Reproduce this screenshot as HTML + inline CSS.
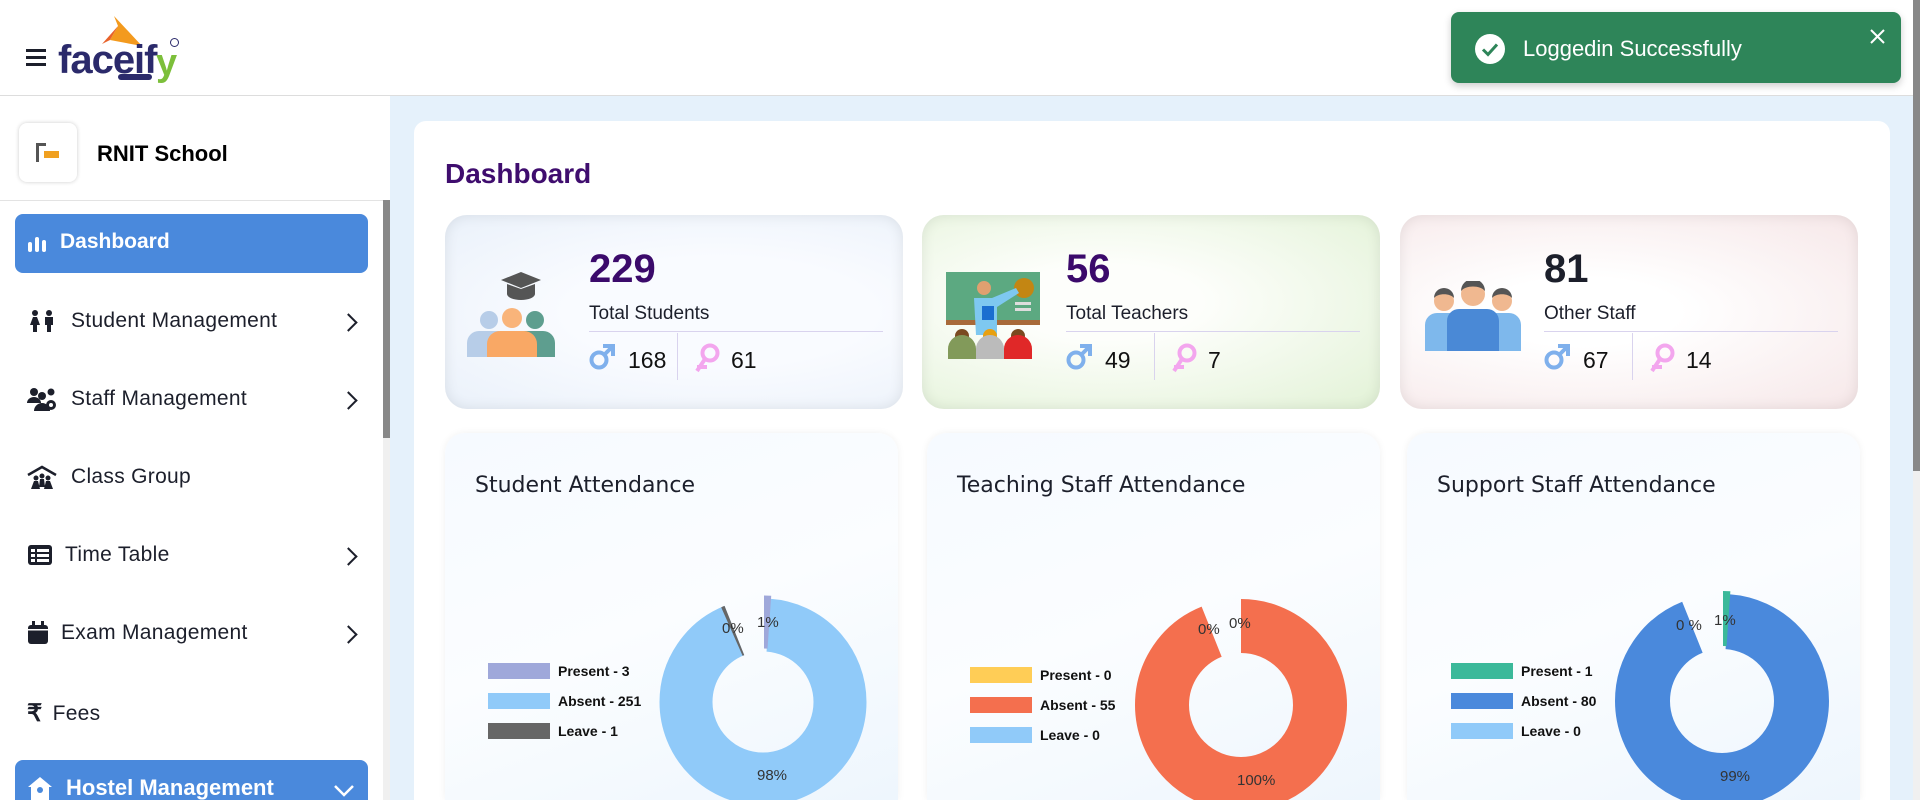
<!DOCTYPE html>
<html><head><meta charset="utf-8"><style>
*{box-sizing:border-box;margin:0;padding:0}
html,body{width:1920px;height:800px;overflow:hidden}
body{background:#e5f1fb;font-family:"Liberation Sans",sans-serif;position:relative;color:#1c1f2b}
.abs{position:absolute}
#hdr{left:0;top:0;width:1920px;height:96px;background:#fff;border-bottom:1px solid #ddd}
#side{left:0;top:96px;width:390px;height:704px;background:#fff}
.nav{position:absolute;left:27px;font-size:21px;color:#1c1f2b;letter-spacing:.3px;display:flex;align-items:center}
.nav svg{margin-right:14px}
.chev{position:absolute;left:342px;width:13px;height:13px;border-right:2.5px solid #1c1f2b;border-top:2.5px solid #1c1f2b;transform:rotate(45deg)}
.stat{position:absolute;top:215px;width:458px;height:194px;border-radius:22px;box-shadow:inset 0 0 14px rgba(0,0,0,.09)}
.num{position:absolute;left:144px;top:32px;font-size:40px;font-weight:bold;color:#3b0a6b}
.lbl{position:absolute;left:144px;top:88px;font-size:19px;color:#1c1f2b}
.hl{position:absolute;left:144px;top:116px;width:294px;height:1px;background:#d9d3ee}
.vl{position:absolute;left:232px;top:118px;width:1px;height:47px;background:#d9d3ee}
.g{position:absolute;top:128px}
.gn{position:absolute;top:132px;font-size:23px;color:#111}
.ch{position:absolute;top:433px;width:453px;height:367px;border-radius:20px 20px 0 0;background:linear-gradient(160deg,#f6faff,#fbfdff 50%,#eef6fd);box-shadow:0 0 8px rgba(0,0,0,.06)}
.ct{position:absolute;left:30px;top:40px;font-size:22px;color:#1c1f2b;font-family:"DejaVu Sans","Liberation Sans",sans-serif}
.lg{position:absolute;font-size:14px;font-weight:bold;color:#111;display:flex;align-items:center;font-family:"Liberation Sans",sans-serif}
.lg i{display:inline-block;width:62px;height:16px;margin-right:8px}
.pl{position:absolute;font-size:15px;color:#333;font-family:"Liberation Sans",sans-serif}
</style></head><body>
<div id="hdr" class="abs"></div>
<div class="abs" style="left:26px;top:49px;width:20px;height:3px;background:#1c1f2b"></div>
<div class="abs" style="left:26px;top:56px;width:20px;height:3px;background:#1c1f2b"></div>
<div class="abs" style="left:26px;top:63px;width:20px;height:3px;background:#1c1f2b"></div>
<svg class="abs" style="left:100px;top:12px" width="80" height="40"><polygon points="14,4 18,14 10,28 42,34" fill="#f39a1e"/><polygon points="18,14 10,28 2,32" fill="#e8622a"/></svg>
<div class="abs" style="left:58px;top:38px;font-size:40px;font-weight:bold;color:#2b2a6b;letter-spacing:-1px">faceif</div>
<div class="abs" style="left:156px;top:42px;font-size:38px;font-weight:bold;color:#7cbf3a">y</div>
<div class="abs" style="left:170px;top:38px;width:9px;height:9px;border:1.5px solid #2b2a6b;border-radius:50%"></div>
<div class="abs" style="left:118px;top:74px;width:34px;height:6px;background:#2b2a6b;border-radius:3px"></div>
<div class="abs" style="left:1451px;top:12px;width:450px;height:71px;background:#2e8559;border-radius:8px;box-shadow:0 3px 8px rgba(0,0,0,.2)"></div>
<svg class="abs" style="left:1475px;top:34px" width="30" height="30"><circle cx="15" cy="15" r="15" fill="#fff"/><path d="M8 15.5l5 5 9-10" stroke="#2e8559" stroke-width="3" fill="none"/></svg>
<div class="abs" style="left:1523px;top:36px;font-size:22px;color:#fff">Loggedin Successfully</div>
<svg class="abs" style="left:1870px;top:29px" width="15" height="15"><path d="M1 1L14 14M14 1L1 14" stroke="#fff" stroke-width="2"/></svg>
<div class="abs" style="left:1913px;top:0;width:7px;height:800px;background:#f0f0f0"></div>
<div class="abs" style="left:1913px;top:0;width:7px;height:471px;background:#888"></div>
<div id="side" class="abs"></div>
<div class="abs" style="left:19px;top:123px;width:58px;height:59px;border-radius:8px;box-shadow:0 0 4px rgba(0,0,0,.2);background:#fff"></div>
<div class="abs" style="left:36px;top:143px;width:3px;height:19px;background:#555"></div>
<div class="abs" style="left:36px;top:143px;width:10px;height:3px;background:#555"></div>
<div class="abs" style="left:44px;top:151px;width:15px;height:7px;background:#f0a020"></div>
<div class="abs" style="left:97px;top:141px;font-size:22px;font-weight:bold;color:#000">RNIT School</div>
<div class="abs" style="left:0;top:200px;width:383px;height:1px;background:#e3e3e3"></div>
<div class="abs" style="left:383px;top:200px;width:7px;height:600px;background:#f0f0f0"></div>
<div class="abs" style="left:383px;top:200px;width:7px;height:238px;background:#888"></div>
<div class="abs" style="left:15px;top:214px;width:353px;height:59px;background:#4a89dc;border-radius:8px"></div>
<svg class="abs" style="left:27px;top:233px" width="20" height="20"><rect x="1" y="9" width="4" height="10" rx="2" fill="#fff"/><rect x="8" y="4" width="4" height="15" rx="2" fill="#fff"/><rect x="15" y="7" width="4" height="12" rx="2" fill="#fff"/></svg>
<div class="abs" style="left:60px;top:230px;font-size:21px;font-weight:bold;color:#fff">Dashboard</div>

<div class="nav" style="top:309px"><svg width="30" height="24"><circle cx="8" cy="4" r="3" fill="#1c1f2b"/><circle cx="22" cy="4" r="3" fill="#1c1f2b"/><path d="M3 16l3-8h4l3 8h-3v7H6v-7z" fill="#1c1f2b"/><path d="M18 8h8v8h-2v7h-4v-7h-2z" fill="#1c1f2b"/></svg>Student Management</div>
<div class="chev" style="top:316px"></div>
<div class="nav" style="top:387px"><svg width="30" height="24"><circle cx="7" cy="5" r="4" fill="#1c1f2b"/><circle cx="24" cy="5" r="3.5" fill="#1c1f2b"/><circle cx="15" cy="9" r="4" fill="#1c1f2b"/><path d="M0 16a7 6 0 0 1 14 0z" fill="#1c1f2b"/><path d="M7 24a8 8 0 0 1 16 0z" fill="#1c1f2b"/><circle cx="24" cy="18" r="5" fill="#1c1f2b"/><circle cx="24" cy="18" r="2" fill="#fff"/></svg>Staff Management</div>
<div class="chev" style="top:394px"></div>
<div class="nav" style="top:465px"><svg width="30" height="24"><path d="M1 10L15 2l14 8" stroke="#1c1f2b" stroke-width="2.5" fill="none"/><circle cx="9" cy="13" r="2.5" fill="#1c1f2b"/><circle cx="15" cy="11" r="2.5" fill="#1c1f2b"/><circle cx="21" cy="13" r="2.5" fill="#1c1f2b"/><path d="M4 24l3-8h4l2 8zM12 22l1-8h4l1 8zM17 24l2-8h4l3 8z" fill="#1c1f2b"/></svg>Class Group</div>
<div class="nav" style="top:543px"><svg width="26" height="24" style="margin-right:12px"><rect x="1" y="2" width="24" height="20" rx="3" fill="#1c1f2b"/><rect x="4" y="6" width="4" height="3" fill="#fff"/><rect x="10" y="6" width="12" height="3" fill="#fff"/><rect x="4" y="11" width="4" height="3" fill="#fff"/><rect x="10" y="11" width="12" height="3" fill="#fff"/><rect x="4" y="16" width="4" height="3" fill="#fff"/><rect x="10" y="16" width="12" height="3" fill="#fff"/></svg>Time Table</div>
<div class="chev" style="top:550px"></div>
<div class="nav" style="top:621px"><svg width="22" height="24" style="margin-right:12px"><rect x="1" y="4" width="20" height="19" rx="3" fill="#1c1f2b"/><rect x="5" y="0" width="3" height="6" fill="#1c1f2b"/><rect x="14" y="0" width="3" height="6" fill="#1c1f2b"/><rect x="1" y="8" width="20" height="1.5" fill="#fff"/></svg>Exam Management</div>
<div class="chev" style="top:628px"></div>
<div class="nav" style="top:699px"><span style="font-size:24px;font-weight:bold;margin-right:10px">₹</span>Fees</div>
<div class="abs" style="left:15px;top:760px;width:353px;height:60px;background:#4a89dc;border-radius:8px"></div>
<svg class="abs" style="left:27px;top:775px" width="26" height="25"><path d="M13 2L1 12h3v13h18V12h3z" fill="#fff"/><circle cx="13" cy="15" r="3" fill="#4a89dc"/></svg>
<div class="abs" style="left:66px;top:775px;font-size:22px;font-weight:bold;color:#fff">Hostel Management</div>
<svg class="abs" style="left:333px;top:784px" width="22" height="14"><path d="M2 2l9 9 9-9" stroke="#fff" stroke-width="2.5" fill="none"/></svg>

<div class="abs" style="left:414px;top:121px;width:1476px;height:679px;background:#fff;border-radius:12px 12px 0 0"></div>
<div class="abs" style="left:445px;top:158px;font-size:28px;font-weight:bold;color:#3f0d6e">Dashboard</div>

<div class="stat" style="left:445px;background:radial-gradient(ellipse at 60% 50%,#f9fbff 40%,#eaf1fa)">
<svg class="abs" style="left:22px;top:57px" width="92" height="85"><path d="M34 8l20-8 20 8-20 8z" fill="#555"/><path d="M40 12v10a14 6 0 0 0 28 0V12l-14 5z" fill="#555"/><circle cx="22" cy="48" r="9" fill="#b7cde8"/><circle cx="68" cy="48" r="9" fill="#5e9e8f"/><path d="M0 85v-14a12 12 0 0 1 12-12h20v26z" fill="#b7cde8"/><path d="M56 85V59h20a12 12 0 0 1 12 12v14z" fill="#5e9e8f"/><circle cx="45" cy="46" r="10" fill="#f9b47a"/><path d="M20 86V72a13 13 0 0 1 13-13h24a13 13 0 0 1 13 13v14z" fill="#f9a865"/></svg>
<div class="num">229</div><div class="lbl">Total Students</div><div class="hl"></div><div class="vl"></div>
<svg class="g" style="left:144px" width="26" height="28"><circle cx="10" cy="17" r="7.5" stroke="#7fb0ec" stroke-width="4" fill="none"/><path d="M15 12l8-8M14 3h10v10" stroke="#7fb0ec" stroke-width="4" fill="none"/></svg><div class="gn" style="left:183px">168</div>
<svg class="g" style="left:250px" width="26" height="30"><circle cx="15" cy="10" r="7.5" stroke="#f3a6ee" stroke-width="4" fill="none"/><path d="M10 16l-8 12M2 24h10" stroke="#f3a6ee" stroke-width="4" fill="none"/></svg><div class="gn" style="left:286px">61</div>
</div>
<div class="stat" style="left:922px;background:radial-gradient(ellipse at 40% 45%,#fdfefb 25%,#e2f2d6)">
<svg class="abs" style="left:24px;top:57px" width="95" height="87"><rect x="0" y="0" width="94" height="52" fill="#5ca981"/><rect x="0" y="48" width="94" height="5" fill="#a86a3a"/><circle cx="78" cy="16" r="10" fill="#c38613"/><rect x="69" y="30" width="16" height="3" fill="#ddd"/><rect x="69" y="36" width="16" height="3" fill="#ddd"/><circle cx="38" cy="16" r="7" fill="#e0a070"/><path d="M28 26h18l24-10 3 5-22 14v28H30z" fill="#7ec8f0"/><rect x="36" y="34" width="12" height="14" fill="#1a6ed0"/><circle cx="16" cy="64" r="7" fill="#7a4a20"/><circle cx="44" cy="64" r="7" fill="#e8a010"/><circle cx="72" cy="64" r="7" fill="#7a4a20"/><path d="M2 87v-10a10 10 0 0 1 28 0v10z" fill="#829a5a"/><path d="M30 87v-10a10 10 0 0 1 28 0v10z" fill="#bbb"/><path d="M58 87v-10a10 10 0 0 1 28 0v10z" fill="#e02828"/></svg>
<div class="num">56</div><div class="lbl">Total Teachers</div><div class="hl"></div><div class="vl"></div>
<svg class="g" style="left:144px" width="26" height="28"><circle cx="10" cy="17" r="7.5" stroke="#7fb0ec" stroke-width="4" fill="none"/><path d="M15 12l8-8M14 3h10v10" stroke="#7fb0ec" stroke-width="4" fill="none"/></svg><div class="gn" style="left:183px">49</div>
<svg class="g" style="left:250px" width="26" height="30"><circle cx="15" cy="10" r="7.5" stroke="#f3a6ee" stroke-width="4" fill="none"/><path d="M10 16l-8 12M2 24h10" stroke="#f3a6ee" stroke-width="4" fill="none"/></svg><div class="gn" style="left:286px">7</div>
</div>
<div class="stat" style="left:1400px;background:radial-gradient(ellipse at 40% 50%,#fff 25%,#f6e7e8)">
<svg class="abs" style="left:25px;top:66px" width="96" height="70"><circle cx="19" cy="20" r="10" fill="#f0b890"/><path d="M9 17a10 10 0 0 1 20 0c-4-5-16-5-20 0z" fill="#555"/><circle cx="77" cy="20" r="10" fill="#f0b890"/><path d="M67 17a10 10 0 0 1 20 0c-4-5-16-5-20 0z" fill="#555"/><path d="M0 70V44a12 12 0 0 1 12-12h20v38z" fill="#7eb8ec"/><path d="M64 70V32h20a12 12 0 0 1 12 12v26z" fill="#7eb8ec"/><circle cx="48" cy="13" r="12" fill="#f0b890"/><path d="M36 10a12 12 0 0 1 24 0c-5-6-19-6-24 0z" fill="#555"/><path d="M22 70V40a12 12 0 0 1 12-12h28a12 12 0 0 1 12 12v30z" fill="#4a89d6"/></svg>
<div class="num" style="color:#1c1f2b">81</div><div class="lbl">Other Staff</div><div class="hl"></div><div class="vl"></div>
<svg class="g" style="left:144px" width="26" height="28"><circle cx="10" cy="17" r="7.5" stroke="#7fb0ec" stroke-width="4" fill="none"/><path d="M15 12l8-8M14 3h10v10" stroke="#7fb0ec" stroke-width="4" fill="none"/></svg><div class="gn" style="left:183px">67</div>
<svg class="g" style="left:250px" width="26" height="30"><circle cx="15" cy="10" r="7.5" stroke="#f3a6ee" stroke-width="4" fill="none"/><path d="M10 16l-8 12M2 24h10" stroke="#f3a6ee" stroke-width="4" fill="none"/></svg><div class="gn" style="left:286px">14</div>
</div>

<div class="ch" style="left:445px"><div class="ct">Student Attendance</div>
<div class="lg" style="left:43px;top:230px"><i style="background:#9fa8da"></i>Present - 3</div>
<div class="lg" style="left:43px;top:260px"><i style="background:#90caf9"></i>Absent - 251</div>
<div class="lg" style="left:43px;top:290px"><i style="background:#666"></i>Leave - 1</div>
</div>
<div class="ch" style="left:927px"><div class="ct">Teaching Staff Attendance</div>
<div class="lg" style="left:43px;top:234px"><i style="background:#ffcd56"></i>Present - 0</div>
<div class="lg" style="left:43px;top:264px"><i style="background:#f46f4e"></i>Absent - 55</div>
<div class="lg" style="left:43px;top:294px"><i style="background:#90caf9"></i>Leave - 0</div>
</div>
<div class="ch" style="left:1407px"><div class="ct">Support Staff Attendance</div>
<div class="lg" style="left:44px;top:230px"><i style="background:#3bb99a"></i>Present - 1</div>
<div class="lg" style="left:44px;top:260px"><i style="background:#4a89dc"></i>Absent - 80</div>
<div class="lg" style="left:44px;top:290px"><i style="background:#90caf9"></i>Leave - 0</div>
</div>

<svg class="abs" style="left:0;top:0" width="1920" height="800">
<g transform="translate(763,702) rotate(-90)" fill="none" stroke-width="53">
<circle r="77" stroke="#90caf9" stroke-dasharray="448.9 1000" stroke-dashoffset="-5.4"/>
<circle r="77" stroke="#666" stroke-dasharray="2.7 1000" stroke-dashoffset="-451.6"/>
</g>
<g transform="translate(764,699) rotate(-90)" fill="none" stroke-width="53"><circle r="77" stroke="#9fa8da" stroke-dasharray="5.4 1000"/></g>
<g transform="translate(1241,705) rotate(-90)" fill="none" stroke-width="54">
<circle r="79" stroke="#f46f4e" stroke-dasharray="466.1 1000"/>
</g>
<g transform="translate(1722,701) rotate(-90)" fill="none" stroke-width="55">
<circle r="79.5" stroke="#4a89dc" stroke-dasharray="463.5 1000" stroke-dashoffset="-5.5"/>
</g>
<g transform="translate(1723,698) rotate(-90)" fill="none" stroke-width="55"><circle r="79.5" stroke="#3bb99a" stroke-dasharray="5.5 1000"/></g>
</svg>
<div class="pl" style="left:722px;top:620px">0%</div>
<div class="pl" style="left:757px;top:614px">1%</div>
<div class="pl" style="left:757px;top:767px">98%</div>
<div class="pl" style="left:1198px;top:621px">0%</div>
<div class="pl" style="left:1229px;top:615px">0%</div>
<div class="pl" style="left:1237px;top:772px">100%</div>
<div class="pl" style="left:1676px;top:617px">0 %</div>
<div class="pl" style="left:1714px;top:612px">1%</div>
<div class="pl" style="left:1720px;top:768px">99%</div>
</body></html>
